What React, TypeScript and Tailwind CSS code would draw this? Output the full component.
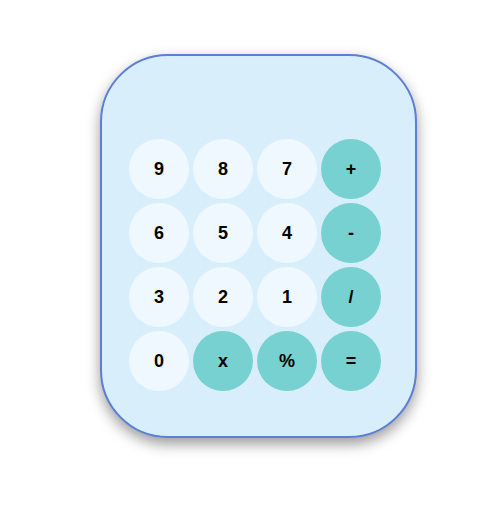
const keys = [
  { label: "9" },
  { label: "8" },
  { label: "7" },
  { label: "+", op: true },
  { label: "6" },
  { label: "5" },
  { label: "4" },
  { label: "-", op: true },
  { label: "3" },
  { label: "2" },
  { label: "1" },
  { label: "/", op: true },
  { label: "0" },
  { label: "x", op: true },
  { label: "%", op: true },
  { label: "=", op: true },
];

export default function App() {
  return (
    <div className="min-h-[509px] w-full bg-white pl-[100px] pt-[54px] font-['Liberation_Sans',Arial,sans-serif]">
      <div className="h-[384px] w-[317px] rounded-[68px] border-2 border-[#5b7fd8] bg-[#d8effb] pl-[27px] pt-[83px] shadow-[0_6px_14px_rgba(0,0,0,0.4)]">
        <div className="grid w-[252px] grid-cols-4 gap-1">
          {keys.map((k) => (
            <button
              key={k.label}
              className={`flex h-[60px] w-[60px] items-center justify-center rounded-full text-[18px] font-bold text-black ${
                k.op ? "bg-[#77d1d0]" : "bg-[#eff8ff]"
              }`}
            >
              {k.label}
            </button>
          ))}
        </div>
      </div>
    </div>
  );
}
